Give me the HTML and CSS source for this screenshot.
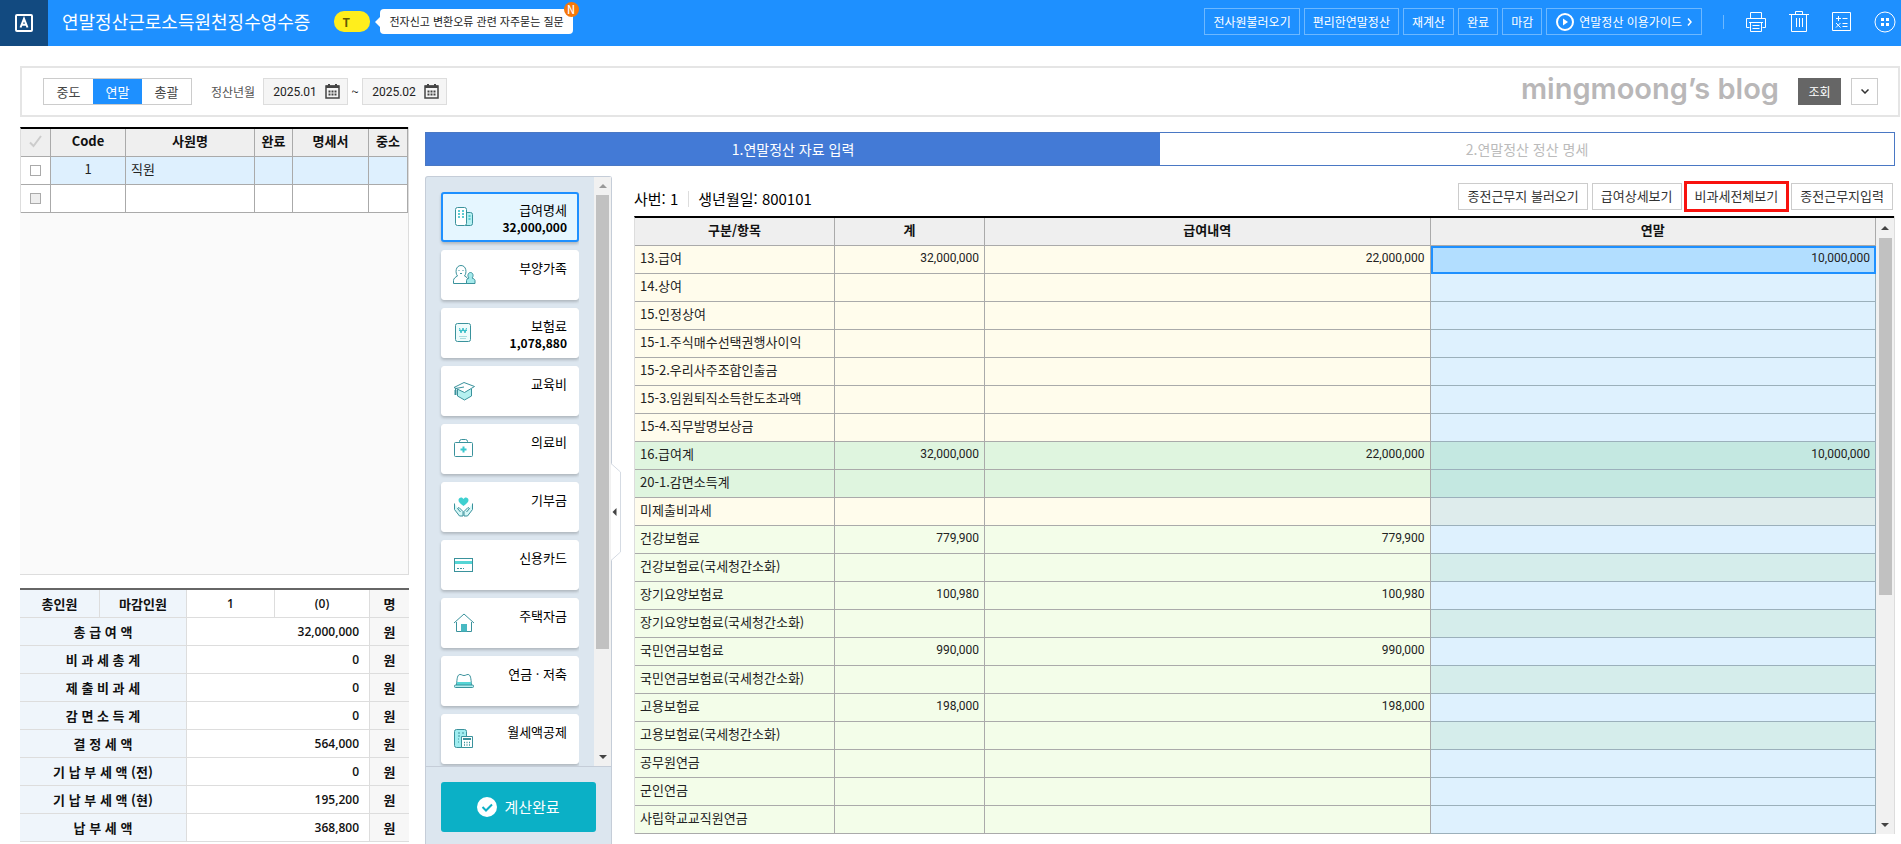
FILE: index.html
```html
<!DOCTYPE html>
<html lang="ko">
<head>
  <meta charset="UTF-8" />
  <meta name="viewport" content="width=device-width, initial-scale=1.0" />
  <title>연말정산근로소득원천징수영수증</title>
  <link rel="stylesheet" href="styles.css">
</head>
<body>
  <header class="topbar">
    <div class="logo">
      <svg width="18" height="18" viewBox="0 0 18 18" fill="none" stroke="#fff" stroke-width="2"><rect x="1" y="1" width="16" height="16" rx="1"/><path d="M5.500 13.500 9 4.800l3.500 8.700M6.600 10.800h4.800"/></svg>
    </div>
    <h1 class="title">연말정산근로소득원천징수영수증</h1>
    <span class="pill">T</span>
    <a class="bubble" href="#">전자신고 변환오류 관련 자주묻는 질문<span class="new">N</span></a>
    <nav class="actions">
      <button>전사원불러오기</button>
      <button>편리한연말정산</button>
      <button>재계산</button>
      <button>완료</button>
      <button>마감</button>
      <button class="guide">
        <svg width="18" height="18" viewBox="0 0 18 18"><circle cx="9" cy="9" r="8" fill="none" stroke="#fff" stroke-width="2"/><path d="M7 5.500 12 9l-5 3.500z" fill="#fff"/></svg>
        연말정산 이용가이드
        <svg width="5" height="8" viewBox="0 0 5 8" fill="none" stroke="#fff" stroke-width="1.500"><path d="M1 .5 4 4 1 7.500"/></svg>
      </button>
    </nav>
    <div class="tools">
      <button aria-label="인쇄"><svg width="22" height="22" viewBox="0 0 22 22" fill="none" stroke="#fff"><path d="M5.500 7.500v-6h11v6M4.500 16.500h-3v-9h19v9h-3M4 11.500h14M5.500 11.500v9h11v-9M7.500 14.500h7M7.500 17.500h7"/></svg></button>
      <button aria-label="삭제"><svg width="22" height="22" viewBox="0 0 22 22" fill="none" stroke="#fff"><path d="M1 3.500h20M7.500 3.500v-3h7v3M3.500 3.500v17h15v-17M8.500 7v9M11.500 7v9M14.500 7v9"/></svg></button>
      <button aria-label="계산기"><svg width="22" height="22" viewBox="0 0 22 22" fill="none" stroke="#fff"><path d="M1.500 1.500h18v18h-18zM5 7.500h5M7.500 5v5M11.500 7.500h5M5 12l4.500 4.500M9.500 12 5 16.500M11.500 12.500h5M11.500 15.500h5"/></svg></button>
      <button aria-label="더보기"><svg width="22" height="22" viewBox="0 0 22 22"><circle cx="11" cy="11" r="10" fill="none" stroke="#fff"/><path d="M7 7h3v3H7zM12 7h3v3h-3zM7 12h3v3H7zM12 12h3v3h-3z" fill="#fff"/></svg></button>
    </div>
  </header>

  <form class="search">
    <div class="segment">
      <button type="button">중도</button>
      <button type="button" class="on">연말</button>
      <button type="button">총괄</button>
    </div>
    <label class="search-label" for="from">정산년월</label>
    <div class="date">
      <input type="text" id="from" value="2025.01" />
      <svg width="15" height="15" viewBox="0 0 15 15"><path d="M1 2h13v12H1z" fill="none" stroke="#444" stroke-width="1.500"/><path d="M1 1.500h13V4H1zM3 0h2v2H3zM10 0h2v2h-2zM3.500 6.500h2v2h-2zM6.500 6.500h2v2h-2zM9.500 6.500h2v2h-2zM3.500 9.500h2v2h-2zM6.500 9.500h2v2h-2zM9.500 9.500h2v2h-2z" fill="#444"/></svg>
    </div>
    <span class="tilde">~</span>
    <div class="date">
      <input type="text" id="to" value="2025.02" aria-label="정산년월 종료" />
      <svg width="15" height="15" viewBox="0 0 15 15"><path d="M1 2h13v12H1z" fill="none" stroke="#444" stroke-width="1.500"/><path d="M1 1.500h13V4H1zM3 0h2v2H3zM10 0h2v2h-2zM3.500 6.500h2v2h-2zM6.500 6.500h2v2h-2zM9.500 6.500h2v2h-2zM3.500 9.500h2v2h-2zM6.500 9.500h2v2h-2zM9.500 9.500h2v2h-2z" fill="#444"/></svg>
    </div>
    <span class="blog">mingmoong’s blog</span>
    <button type="button" class="query">조회</button>
    <button type="button" class="more" aria-label="펼치기"><svg width="8" height="5" viewBox="0 0 8 5" fill="none" stroke="#333" stroke-width="1.500"><path d="M.5.5 4 4 7.500.5"/></svg></button>
  </form>

  <main class="page">
    <aside class="left">
      <div class="employees">
        <table class="grid">
          <colgroup><col class="w-check"><col class="w-code"><col><col class="w-done"><col class="w-doc"><col class="w-small"></colgroup>
          <thead>
            <tr>
              <th><svg width="13" height="13" viewBox="0 0 13 13" fill="none" stroke="#ccc" stroke-width="2"><path d="M1 7.500 4.500 11 12 1"/></svg></th>
              <th>Code</th><th>사원명</th><th>완료</th><th>명세서</th><th>중소</th>
            </tr>
          </thead>
          <tbody>
            <tr class="selected"><td class="check"><input type="checkbox" aria-label="직원 선택"></td><td class="center">1</td><td>직원</td><td></td><td></td><td></td></tr>
            <tr><td class="check"><input type="checkbox" disabled aria-label="새 행"></td><td></td><td></td><td></td><td></td><td></td></tr>
          </tbody>
        </table>
      </div>
      <table class="summary">
        <colgroup><col class="s-a"><col class="s-b"><col class="s-c"><col><col class="s-unit"></colgroup>
        <tbody>
          <tr><th>총인원</th><th>마감인원</th><td class="center">1</td><td class="center">(0)</td><td class="unit">명</td></tr>
          <tr><th colspan="2">총 급 여 액</th><td colspan="2">32,000,000</td><td class="unit">원</td></tr>
          <tr><th colspan="2">비 과 세 총 계</th><td colspan="2">0</td><td class="unit">원</td></tr>
          <tr><th colspan="2">제 출 비 과 세</th><td colspan="2">0</td><td class="unit">원</td></tr>
          <tr><th colspan="2">감 면 소 득 계</th><td colspan="2">0</td><td class="unit">원</td></tr>
          <tr><th colspan="2">결 정 세 액</th><td colspan="2">564,000</td><td class="unit">원</td></tr>
          <tr><th colspan="2">기 납 부 세 액 (전)</th><td colspan="2">0</td><td class="unit">원</td></tr>
          <tr><th colspan="2">기 납 부 세 액 (현)</th><td colspan="2">195,200</td><td class="unit">원</td></tr>
          <tr><th colspan="2">납 부 세 액</th><td colspan="2">368,800</td><td class="unit">원</td></tr>
        </tbody>
      </table>
    </aside>

    <section class="right">
      <div class="tabs">
        <button class="on">1.연말정산 자료 입력</button>
        <button>2.연말정산 정산 명세</button>
      </div>
      <div class="work">
        <div class="menu">
          <div class="menu-scroll">
            <div class="cards">
              <button class="card on">
                <svg class="icon" viewBox="0 0 24 24"><path d="M13.500 7.500h5a2 2 0 0 1 2 2v9a2 2 0 0 1-2 2h-5z" fill="#b5f0f2"/><rect x="3.500" y="2.500" width="11" height="18" rx="2" fill="#fff"/><path d="M6 6h2M10 6h2M6 9h2M10 9h2M6 12h2M10 12h2M16.500 11h2M16.500 14h2" stroke-width="2" stroke="#5ccbd2"/></svg>
                <span>급여명세<b>32,000,000</b></span>
              </button>
              <button class="card">
                <svg class="icon" viewBox="0 0 24 24"><path d="M1.500 20.500v-3c0-2 2-3.500 4-4.500C3 10 3.500 2.500 9 2.500s6 7.500 3.500 10.500c2 1 4 2.500 4 4.500v3z" fill="#fff"/><path d="M14.500 20.500v-3c0-1 1-2 2.500-2.500-2-2-1-5.500 1.500-5.500s3.500 3.500 1.500 5.500c1.500.5 3 1.500 3 2.500v3z" fill="#a5eaec"/><path d="M6.500 7.500h1M10.500 7.500h1M8 10.500h2"/></svg>
                <span>부양가족</span>
              </button>
              <button class="card">
                <svg class="icon" viewBox="0 0 24 24"><rect x="3.500" y="2.500" width="15" height="18" rx="2" fill="#eefcfc"/><path d="m7.500 7 1.500 5 2-5 2 5 1.500-5M7 9.500h8" stroke="#39bfc9"/><path d="M7 15.500h8M8 17.500h6" stroke="#a8dde0"/></svg>
                <span>보험료<b>1,078,880</b></span>
              </button>
              <button class="card">
                <svg class="icon" viewBox="0 0 24 24"><path d="M5.500 10v7l7 4 7-4v-7" fill="#b5f0f0"/><path d="m2 8.500 10-5 10.500 4-10 6z" fill="#fff"/><path d="M12 8 3.500 9.500V15"/><path d="M3.500 11v5" stroke-width="2"/></svg>
                <span>교육비</span>
              </button>
              <button class="card">
                <svg class="icon" viewBox="0 0 24 24"><path d="M7.500 6V4.500a2 2 0 0 1 2-2h4a2 2 0 0 1 2 2V6"/><rect x="2.500" y="5.500" width="18" height="14" rx="1" fill="#fff"/><path d="M11.500 9.500v6M8.500 12.500h6" stroke="#3bc8ce" stroke-width="2"/></svg>
                <span>의료비</span>
              </button>
              <button class="card">
                <svg class="icon" viewBox="0 0 24 24"><path d="M11.500 11C8 8.500 6.500 7 6.500 5c0-3 4-3.500 5-1 1-2.500 5-2 5 1 0 2-1.500 3.500-5 6z" fill="#3fd0d0" stroke="none"/><path d="M2.500 8.500v6l5 6.500h3.500v-4.500l-4-4-1.500 1 3 3.500M20.500 8.500v6l-5 6.500H12v-4.500l4-4 1.500 1-3 3.500" fill="#d5f7f7"/></svg>
                <span>기부금</span>
              </button>
              <button class="card">
                <svg class="icon" viewBox="0 0 24 24"><rect x="2.500" y="5.500" width="18" height="13" fill="#fff"/><path d="M3 9.500h17" stroke="#55d5d5" stroke-width="3"/><path d="M5 15.500h2M8 15.500h2M11 15.500h1"/></svg>
                <span>신용카드</span>
              </button>
              <button class="card">
                <svg class="icon" viewBox="0 0 24 24"><path d="M4.500 11v9.500h15V11" fill="#fff"/><path d="m2 12 10-9 10 9"/><path d="M9 13h6v7.500H9z" fill="#48b9c2" stroke="none"/></svg>
                <span>주택자금</span>
              </button>
              <button class="card">
                <svg class="icon" viewBox="0 0 24 24"><path d="M4.500 16.500C5 9 5.500 5.500 8 5.500c2 0 2 1 4 1s2-1 4-1c2.500 0 3 3.500 3.500 11" fill="#fff"/><path d="M5 14.500h14" stroke="#55d5d5" stroke-width="3"/><rect x="2.500" y="16" width="19" height="2.500" rx="1" fill="#b5f0f0"/></svg>
                <span>연금 · 저축</span>
              </button>
              <button class="card">
                <svg class="icon" viewBox="0 0 24 24"><rect x="2.500" y="2.500" width="12" height="18" rx="2" fill="#a0edf0"/><path d="M6 6h2M10 6h2M6 9h2M6 12h1M6 15h1"/><path d="M9.500 9.500h11v11h-11z" fill="#fff"/><path d="M11 12h8" stroke-width="2"/><path d="M12 15.500h1M14.500 15.500h1M17 15.500h1M12 18h1M14.500 18h1M17 18h1" stroke-width="1.500"/></svg>
                <span>월세액공제</span>
              </button>
            </div>
            <div class="bar" aria-hidden="true"><i class="up"></i><div class="thumb"></div><i class="down"></i></div>
          </div>
          <div class="menu-foot">
            <button class="finish">
              <svg width="20" height="20" viewBox="0 0 20 20"><circle cx="10" cy="10" r="10" fill="#fff"/><path d="m5.500 10 3.500 3.500 6-6" fill="none" stroke="#0bb0c6" stroke-width="2"/></svg>
              계산완료
            </button>
          </div>
          <button class="handle" aria-label="접기"><svg width="10" height="98" viewBox="0 0 10 98"><path d="M0 .5 9.500 9v80L0 97.500" fill="#fff" stroke="#d5dbe3"/><path d="M5.500 45v8L1.500 49z" fill="#444"/></svg></button>
        </div>

        <div class="detail">
          <div class="detail-head">
            <span class="who">사번: 1</span>
            <span class="who birth">생년월일: 800101</span>
            <div class="detail-actions">
              <button>종전근무지 불러오기</button>
              <button>급여상세보기</button>
              <button class="marked">비과세전체보기</button>
              <button>종전근무지입력</button>
            </div>
          </div>
          <div class="sheet">
            <table class="grid pay">
              <colgroup><col class="w-item"><col class="w-total"><col><col></colgroup>
              <thead><tr><th>구분/항목</th><th>계</th><th>급여내역</th><th>연말</th></tr></thead>
              <tbody>
                <tr><td>13.급여</td><td>32,000,000</td><td>22,000,000</td><td class="focus">10,000,000</td></tr>
                <tr><td>14.상여</td><td></td><td></td><td></td></tr>
                <tr><td>15.인정상여</td><td></td><td></td><td></td></tr>
                <tr><td>15-1.주식매수선택권행사이익</td><td></td><td></td><td></td></tr>
                <tr><td>15-2.우리사주조합인출금</td><td></td><td></td><td></td></tr>
                <tr><td>15-3.임원퇴직소득한도초과액</td><td></td><td></td><td></td></tr>
                <tr><td>15-4.직무발명보상금</td><td></td><td></td><td></td></tr>
                <tr class="sum"><td>16.급여계</td><td>32,000,000</td><td>22,000,000</td><td>10,000,000</td></tr>
                <tr class="sum"><td>20-1.감면소득계</td><td></td><td></td><td></td></tr>
                <tr class="locked"><td>미제출비과세</td><td></td><td></td><td></td></tr>
                <tr class="ins"><td>건강보험료</td><td>779,900</td><td>779,900</td><td></td></tr>
                <tr class="ins auto"><td>건강보험료(국세청간소화)</td><td></td><td></td><td></td></tr>
                <tr class="ins"><td>장기요양보험료</td><td>100,980</td><td>100,980</td><td></td></tr>
                <tr class="ins auto"><td>장기요양보험료(국세청간소화)</td><td></td><td></td><td></td></tr>
                <tr class="ins"><td>국민연금보험료</td><td>990,000</td><td>990,000</td><td></td></tr>
                <tr class="ins auto"><td>국민연금보험료(국세청간소화)</td><td></td><td></td><td></td></tr>
                <tr class="ins"><td>고용보험료</td><td>198,000</td><td>198,000</td><td></td></tr>
                <tr class="ins auto"><td>고용보험료(국세청간소화)</td><td></td><td></td><td></td></tr>
                <tr class="ins"><td>공무원연금</td><td></td><td></td><td></td></tr>
                <tr class="ins"><td>군인연금</td><td></td><td></td><td></td></tr>
                <tr class="ins"><td>사립학교교직원연금</td><td></td><td></td><td></td></tr>
              </tbody>
            </table>
            <div class="bar" aria-hidden="true"><i class="up"></i><div class="thumb"></div><i class="down"></i></div>
          </div>
        </div>
      </div>
    </section>
  </main>
</body>
</html>
```
FILE: styles.css
```css
* {
  box-sizing: border-box;
}

body {
  margin: 0;
  height: 100vh;
  overflow: hidden;
  display: flex;
  flex-direction: column;
  background: #fff;
  color: #222;
  font-family: 'Noto Sans CJK KR', sans-serif;
  font-size: 13px;
  line-height: 18px;
}

button, input {
  font-family: inherit;
  font-size: 13px;
  line-height: 18px;
  margin: 0;
  padding: 0;
  color: inherit;
}

button {
  cursor: pointer;
  background: none;
  border: 0;
}

svg {
  display: block;
  flex: none;
}

table {
  border-spacing: 0;
  table-layout: fixed;
  width: 100%;
}

/* top bar */
.topbar {
  flex: none;
  height: 46px;
  display: flex;
  align-items: center;
  background: #1e90ff;
  color: #fff;
  padding-right: 5px;
}

.logo {
  width: 48px;
  height: 46px;
  display: flex;
  align-items: center;
  justify-content: center;
  background: #124a80;
}

.title {
  margin: 0 24px 4px 14px;
  font-size: 18px;
  line-height: 24px;
  font-weight: 400;
}

.pill {
  width: 36px;
  height: 21px;
  margin-bottom: 3px;
  padding-left: 8px;
  border-radius: 10px;
  background: #ffee1c;
  color: #665a00;
  font-size: 12px;
  line-height: 21px;
  font-weight: 700;
}

.bubble {
  position: relative;
  height: 25px;
  margin: 0 0 3px 10px;
  padding: 0 9px;
  border-radius: 4px;
  background: #fff;
  color: #222;
  font-size: 11px;
  line-height: 25px;
  text-decoration: none;
}

.bubble::before {
  content: '';
  position: absolute;
  left: -5px;
  top: 8px;
  border: 5px solid transparent;
  border-left-width: 0;
  border-right-color: #fff;
}

.new {
  position: absolute;
  right: -6px;
  top: -7px;
  width: 15px;
  height: 15px;
  border-radius: 50%;
  background: #f5780a;
  color: #fff;
  line-height: 15px;
  font-weight: 500;
  text-align: center;
}

.actions {
  display: flex;
  gap: 4px;
  margin: 0 21px 3px auto;
}

.actions button {
  height: 27px;
  padding: 0 8px;
  border: 1px solid #6db8ff;
  font-size: 12px;
}

.actions .guide {
  display: flex;
  align-items: center;
  gap: 5px;
  padding: 0 9px;
}

.tools {
  display: flex;
  gap: 21px;
  margin-bottom: 2px;
  padding-left: 22px;
  background: linear-gradient(#6db8ff, #6db8ff) left center / 1px 14px no-repeat;
}

/* search */
.search {
  flex: none;
  height: 51px;
  margin: 20px 1px 0 20px;
  padding: 0 20px 0 21px;
  display: flex;
  align-items: center;
  border: 2px solid #e5e5e5;
}

.segment {
  display: flex;
  border: 1px solid #ccc;
}

.segment button {
  width: 49px;
  height: 25px;
  color: #444;
}

.segment .on {
  background: #1e90ff;
  color: #fff;
}

.search-label {
  margin: 0 8px 0 19px;
  font-size: 12px;
  color: #555;
}

.date {
  width: 85px;
  height: 27px;
  display: flex;
  align-items: center;
  justify-content: space-between;
  padding: 0 7px 0 9px;
  border: 1px solid #ddd;
  background: #f5f5f5;
}

.date input {
  width: 48px;
  border: 0;
  background: none;
  font-family: Roboto, sans-serif;
  font-size: 12px;
}

.tilde {
  width: 14px;
  text-align: center;
}

.blog {
  margin: 0 19px 6px auto;
  color: #b9b7b8;
  font-family: Inter, sans-serif;
  font-size: 29px;
  line-height: 36px;
  font-weight: 600;
}

.query {
  width: 43px;
  height: 27px;
  margin-right: 10px;
  background: #666;
  color: #fff;
  font-size: 12px;
}

.more {
  width: 27px;
  height: 27px;
  border: 1px solid #ccc;
  display: flex;
  align-items: center;
  justify-content: center;
}

/* page */
.page {
  flex: 1;
  min-height: 0;
  display: flex;
  gap: 16px;
  padding: 10px 6px 0 20px;
}

.left {
  flex: none;
  width: 389px;
  display: flex;
  flex-direction: column;
  gap: 13px;
  padding-bottom: 2px;
}

.employees {
  flex: 1;
  background: #fafafa;
  border-right: 1px solid #ddd;
  border-bottom: 1px solid #ddd;
}

.grid {
  border-top: 2px solid #000;
  border-left: 1px solid #ddd;
}

.grid th, .grid td {
  height: 28px;
  padding: 0 5px 3px;
  border-right: 1px solid #aaa;
  border-bottom: 1px solid #aaa;
  background: #fff;
  white-space: nowrap;
}

.grid th {
  background: #efefef;
  color: #111;
  font-weight: 700;
}

.grid th svg {
  margin: 0 auto;
}

.w-check { width: 30px; }
.w-code { width: 75px; }
.w-done { width: 38px; }
.w-doc { width: 76px; }
.w-small { width: 39px; }
.w-item { width: 200px; }
.w-total { width: 150px; }

.grid .center, .grid .check {
  text-align: center;
}

.grid .selected td {
  background: #def0fe;
}

.grid .selected .check {
  background: #fff;
}

.check input {
  appearance: none;
  display: block;
  width: 11px;
  height: 11px;
  margin: 3px auto 0;
  border: 1px solid #aaa;
}

.check input:disabled {
  background: #eee;
}

.summary {
  border-top: 2px solid #666;
}

.summary th, .summary td {
  height: 28px;
  padding: 0 10px;
  border-right: 1px solid #ddd;
  border-bottom: 1px solid #ddd;
  font-weight: 700;
  color: #111;
  text-align: center;
}

.summary th {
  padding: 0;
  background: #eff5fb;
}

.summary td {
  font-family: 'Open Sans', 'Noto Sans CJK KR', sans-serif;
  font-size: 12px;
  font-weight: 600;
  text-align: right;
}

.summary .center {
  text-align: center;
}

.summary .unit {
  padding: 0;
  border-right: 0;
  background: #f7f7f7;
  font-size: 13px;
  text-align: center;
}

.s-a { width: 80px; }
.s-b { width: 87px; }
.s-c { width: 88px; }
.s-unit { width: 39px; }

/* right side */
.right {
  flex: 1;
  min-width: 0;
  display: flex;
  flex-direction: column;
  padding-top: 5px;
}

.tabs {
  flex: none;
  display: flex;
  border: 1px solid #4a78c4;
}

.tabs button {
  flex: 1;
  height: 32px;
  padding-bottom: 1px;
  font-size: 14px;
  color: #bbb;
}

.tabs .on {
  background: #437ad6;
  color: #fff;
}

.work {
  flex: 1;
  min-height: 0;
  display: flex;
  gap: 22px;
  padding-top: 10px;
}

.menu {
  position: relative;
  flex: none;
  width: 187px;
  display: flex;
  flex-direction: column;
  border: 1px solid #c5cdd8;
  border-bottom: 0;
  border-radius: 3px 3px 0 0;
  background: #dce6ef;
}

.menu-scroll {
  flex: 1;
  min-height: 0;
  display: flex;
  justify-content: space-between;
}

.cards {
  display: flex;
  flex-direction: column;
  gap: 8px;
  padding: 15px 0 0 15px;
  overflow: hidden;
}

.card {
  flex: none;
  width: 138px;
  height: 50px;
  display: flex;
  justify-content: space-between;
  padding: 8px 11px 0 10px;
  border: 1px solid #fff;
  border-radius: 3px;
  background: #fff;
  box-shadow: 0 2px 3px rgba(0, 0, 0, 0.2);
  color: #000;
  line-height: 17px;
  text-align: right;
}

.card.on {
  padding: 7px 10px 0 9px;
  border: 2px solid #1e90ff;
  background: #e5f6ff;
}

.card b {
  display: block;
  font-size: 12px;
}

.icon {
  width: 24px;
  height: 24px;
  margin-top: 4px;
  fill: none;
  stroke: #3a929c;
}

.bar {
  flex: none;
  width: 17px;
  display: flex;
  flex-direction: column;
  align-items: center;
  background: #f1f1f1;
}

.bar .up, .bar .down {
  margin: 7px 0;
  border: 4px solid transparent;
}

.bar .up {
  border-top-width: 0;
  border-bottom-color: #444;
}

.bar .down {
  margin-top: auto;
  border-bottom-width: 0;
  border-top-color: #444;
}

.bar .thumb {
  width: 13px;
  height: 77%;
  background: #c1c1c1;
}

.menu .up {
  border-bottom-color: #999;
}

.menu-foot {
  flex: none;
  height: 78px;
  padding: 15px;
  border-top: 1px solid #c5cdd8;
}

.finish {
  width: 155px;
  height: 50px;
  display: flex;
  align-items: center;
  justify-content: center;
  gap: 7px;
  border-radius: 3px;
  background: #0bb0c6;
  color: #fff;
  font-size: 15px;
}

.handle {
  position: absolute;
  left: 100%;
  top: 286px;
}

.detail {
  flex: 1;
  min-width: 0;
}

.detail-head {
  height: 40px;
  display: flex;
  align-items: center;
  color: #000;
  font-size: 15px;
}

.who {
  margin-top: 6px;
}

.birth {
  margin-left: 10px;
  padding-left: 10px;
  background: linear-gradient(#ddd, #ddd) left center / 1px 16px no-repeat;
}

.detail-actions {
  display: flex;
  gap: 4px;
  margin: 0 2px 0 auto;
}

.detail-actions button {
  height: 27px;
  padding: 0 8px;
  border: 1px solid #ccc;
  background: #fff;
  color: #333;
}

.detail-actions .marked {
  outline: 2px solid #f8120e;
  border-color: #f8120e;
}

.sheet {
  display: flex;
  border-right: 1px solid #ddd;
}

.sheet .bar {
  width: 18px;
  border-top: 2px solid #000;
}

.sheet .up {
  margin: 8px 0;
}

.sheet .thumb {
  height: 58%;
}

.pay {
  flex: 1;
}

.pay td {
  background: #fffcec;
}

.pay td + td {
  font-family: Roboto, sans-serif;
  font-size: 12px;
  text-align: right;
}

.pay td:last-child {
  background: #def1fe;
  border-color: #9bb0bb;
}

.pay .sum td {
  background: #dff5df;
}

.pay .sum td:last-child {
  background: #c4e8e1;
}

.pay .locked td:last-child {
  background: #deecec;
}

.pay .ins td {
  background: #f3fde9;
}

.pay .ins td:last-child {
  background: #def1fe;
}

.pay .auto td:last-child {
  background: #d5edeb;
}

.pay .focus:last-child {
  background: #b2deff;
  outline: 2px solid #1e90ff;
  outline-offset: -2px;
}
```
